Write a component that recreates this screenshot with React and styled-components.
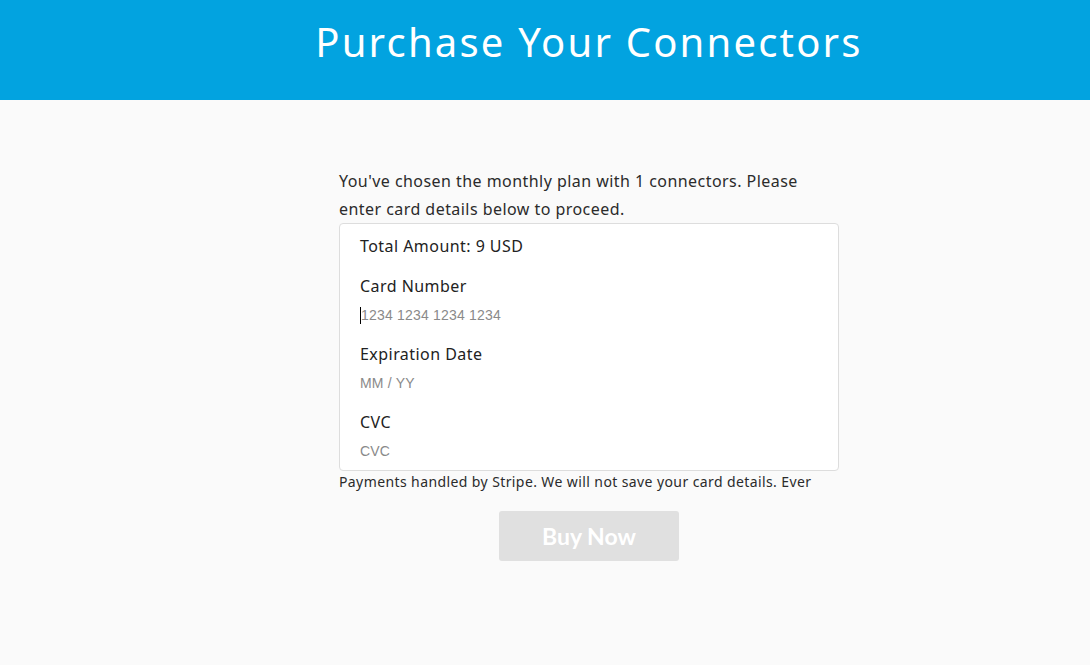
import React from 'react'
import styled, { createGlobalStyle } from 'styled-components'

const GlobalStyle = createGlobalStyle`
  html, body {
    margin: 0;
    padding: 0;
    background: #fafafa;
  }
  body {
    font-family: "Noto Sans", "Open Sans", sans-serif;
    color: #333;
  }
`

function App() {
  return (
    <Page>
      <GlobalStyle />
      <Header>
        <Title>Purchase Your Connectors</Title>
      </Header>
      <Main>
        <Checkout>
          <Intro>
            You've chosen the monthly plan with 1 connectors. Please enter card details below to proceed.
          </Intro>
          <Card>
            <Total>Total Amount: 9 USD</Total>
            <Field>
              <Label>Card Number</Label>
              <Input>
                <Caret />
                1234 1234 1234 1234
              </Input>
            </Field>
            <Field>
              <Label>Expiration Date</Label>
              <Input>MM / YY</Input>
            </Field>
            <Field last>
              <Label>CVC</Label>
              <Input>CVC</Input>
            </Field>
          </Card>
          <Note>Payments handled by Stripe. We will not save your card details. Ever</Note>
          <BuyButton disabled>Buy Now</BuyButton>
        </Checkout>
      </Main>
    </Page>
  )
}

export default App

const Page = styled.div`
  min-height: 665px;
  background: #fafafa;
`
const Header = styled.header`
  height: 100px;
  background: #02a3e0;
  display: flex;
  align-items: center;
  justify-content: center;
  padding-left: 88px;
`
const Title = styled.h1`
  margin: 0 0 17px;
  font-weight: 400;
  font-size: 40px;
  color: #fff;
  letter-spacing: 2.2px;
`
const Main = styled.main`
  display: flex;
  justify-content: center;
  padding: 67px 0 0 88px;
`
const Checkout = styled.div`
  width: 500px;
  display: flex;
  flex-direction: column;
`
const Intro = styled.p`
  margin: 0;
  padding-right: 10px;
  font-size: 16px;
  line-height: 28px;
  letter-spacing: 0.45px;
  color: #2b2b2b;
`
const Card = styled.div`
  background: #fff;
  border: 1px solid #ddd;
  border-radius: 4px;
  padding: 10px 20px 9px;
`
const Total = styled.div`
  font-size: 16px;
  line-height: 24px;
  letter-spacing: 0.45px;
  color: #222;
  margin-bottom: 16px;
`
const Field = styled.div`
  margin-bottom: ${p => (p.last ? '0' : '17px')};
`
const Label = styled.div`
  font-size: 16px;
  line-height: 24px;
  letter-spacing: 0.45px;
  color: #222;
`
const Input = styled.div`
  margin-top: 7px;
  height: 20px;
  display: flex;
  align-items: center;
  font-family: "Liberation Sans", Arial, sans-serif;
  font-size: 14px;
  letter-spacing: 0.2px;
  color: #8a8a8a;
`
const Caret = styled.span`
  display: inline-block;
  width: 1px;
  height: 17px;
  background: #000;
`
const Note = styled.div`
  font-size: 14px;
  line-height: 21px;
  letter-spacing: 0.4px;
  color: #2b2b2b;
`
const BuyButton = styled.button`
  align-self: center;
  margin-top: 19px;
  width: 180px;
  height: 50px;
  border: none;
  border-radius: 3px;
  background: #e0e0e0;
  color: #fff;
  font-family: Lato, sans-serif;
  font-weight: 700;
  font-size: 23px;
  cursor: default;
`
